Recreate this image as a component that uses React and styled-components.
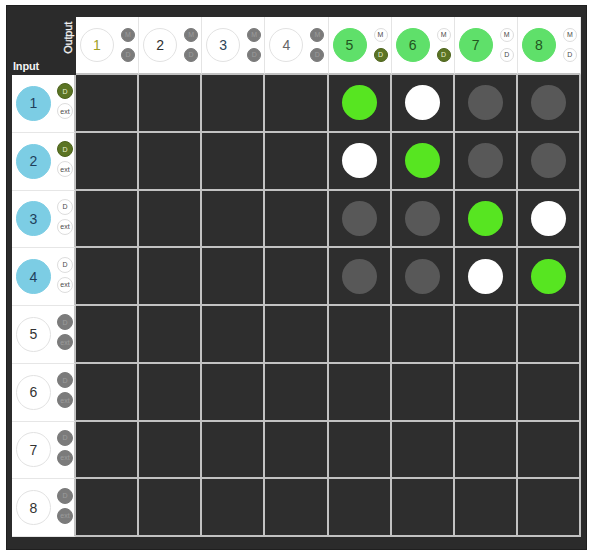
import React from "react";
import styled, { createGlobalStyle, css } from "styled-components";

const Global = createGlobalStyle`
  html, body { margin: 0; padding: 0; background: #ffffff; }
  body { font-family: "Liberation Sans", Arial, sans-serif; }
  * { box-sizing: border-box; }
`;

const Frame = styled.div`
  display: inline-block;
  margin: 5px 0 0 6px;
  padding: 11px 5px 12px 5px;
  background: #2b2b2b;
  border: 1px solid #1f1f1f;
`;

const Grid = styled.div`
  display: grid;
  grid-template-columns: 64px repeat(8, 63.125px);
  grid-template-rows: 58px repeat(8, 57.75px);
`;

const Corner = styled.div`
  display: flex;
  align-items: flex-end;
  justify-content: space-between;
  padding: 0 2px 3px 1px;
  color: #f2f2f2;
  font-size: 11px;
  font-weight: bold;
  letter-spacing: -0.2px;
`;

const CornerInput = styled.span`
  line-height: 1;
`;

const CornerOutput = styled.span`
  writing-mode: vertical-rl;
  transform: rotate(180deg);
  align-self: flex-start;
  margin-top: 5px;
  line-height: 1;
  font-weight: normal;
  -webkit-text-stroke: 0.3px #f2f2f2;
`;

const HeaderCell = styled.div`
  display: flex;
  align-items: center;
  gap: 7px;
  padding-left: 4px;
  background: #ffffff;
  border-right: 1px solid #e4e4e4;
  border-bottom: 2px solid #c2c2c2;
`;

const InputCell = styled.div`
  display: flex;
  align-items: center;
  gap: 6px;
  padding-left: 4px;
  background: #ffffff;
  border-bottom: 1px solid #e6e6e6;
  border-right: 2px solid #c2c2c2;
`;

const MatrixCell = styled.div`
  display: flex;
  align-items: center;
  justify-content: center;
  background: #2e2e2e;
  border-right: 2px solid #c2c2c2;
  border-bottom: 2px solid #c2c2c2;
`;

const bigVariants = {
  white: css`
    background: #ffffff;
    border: 1px solid #e2e2e2;
  `,
  blue: css`
    background: #7ccde4;
    border: 1px solid #7ccde4;
  `,
  green: css`
    background: #5fe06a;
    border: 1px solid #5fe06a;
  `,
};

const BigCircle = styled.div`
  width: ${(p) => p.$size}px;
  height: ${(p) => p.$size}px;
  border-radius: 50%;
  display: flex;
  align-items: center;
  justify-content: center;
  font-size: 14px;
  color: ${(p) => p.$color};
  flex: none;
  ${(p) => bigVariants[p.$variant]}
`;

const SmallStack = styled.div`
  display: flex;
  flex-direction: column;
  gap: ${(p) => p.$gap}px;
  margin-top: ${(p) => p.$offset}px;
`;

const smallVariants = {
  gray: css`
    background: #7b7b7b;
    color: #9c9c9c;
    border: 1px solid #7b7b7b;
  `,
  white: css`
    background: #ffffff;
    color: #4a4a4a;
    border: 1px solid #dddddd;
  `,
  olive: css`
    background: #5b7424;
    color: #e8f0d0;
    border: 1px solid #4c621c;
  `,
};

const SmallCircle = styled.div`
  width: ${(p) => p.$size}px;
  height: ${(p) => p.$size}px;
  border-radius: 50%;
  display: flex;
  align-items: center;
  justify-content: center;
  font-size: 7px;
  line-height: 1;
  ${(p) => smallVariants[p.$variant]}
`;

const dotColors = {
  green: "#57e521",
  white: "#ffffff",
  gray: "#585858",
};

const Dot = styled.div`
  width: 35px;
  height: 35px;
  border-radius: 50%;
  background: ${(p) => dotColors[p.$kind]};
`;

const outputs = [
  { n: 1, big: "white", color: "#a0a024", m: "gray", d: "gray" },
  { n: 2, big: "white", color: "#2f2f2f", m: "gray", d: "gray" },
  { n: 3, big: "white", color: "#2c4458", m: "gray", d: "gray" },
  { n: 4, big: "white", color: "#666666", m: "gray", d: "gray" },
  { n: 5, big: "green", color: "#22561f", m: "white", d: "olive" },
  { n: 6, big: "green", color: "#22561f", m: "white", d: "olive" },
  { n: 7, big: "green", color: "#22561f", m: "white", d: "white" },
  { n: 8, big: "green", color: "#22561f", m: "white", d: "white" },
];

const inputs = [
  { n: 1, big: "blue", color: "#1f3f5c", d: "olive", e: "white" },
  { n: 2, big: "blue", color: "#1f3f5c", d: "olive", e: "white" },
  { n: 3, big: "blue", color: "#1f3f5c", d: "white", e: "white" },
  { n: 4, big: "blue", color: "#1f3f5c", d: "white", e: "white" },
  { n: 5, big: "white", color: "#333333", d: "gray", e: "gray" },
  { n: 6, big: "white", color: "#333333", d: "gray", e: "gray" },
  { n: 7, big: "white", color: "#333333", d: "gray", e: "gray" },
  { n: 8, big: "white", color: "#333333", d: "gray", e: "gray" },
];

const dots = [
  [null, null, null, null, "green", "white", "gray", "gray"],
  [null, null, null, null, "white", "green", "gray", "gray"],
  [null, null, null, null, "gray", "gray", "green", "white"],
  [null, null, null, null, "gray", "gray", "white", "green"],
  [null, null, null, null, null, null, null, null],
  [null, null, null, null, null, null, null, null],
  [null, null, null, null, null, null, null, null],
  [null, null, null, null, null, null, null, null],
];

export default function App() {
  return (
    <>
      <Global />
      <Frame>
        <Grid>
          <Corner>
            <CornerInput>Input</CornerInput>
            <CornerOutput>Output</CornerOutput>
          </Corner>
          {outputs.map((o) => (
            <HeaderCell key={`o${o.n}`}>
              <BigCircle $size={34} $variant={o.big} $color={o.color}>
                {o.n}
              </BigCircle>
              <SmallStack $gap={6} $offset={-1}>
                <SmallCircle $size={14} $variant={o.m}>M</SmallCircle>
                <SmallCircle $size={14} $variant={o.d}>D</SmallCircle>
              </SmallStack>
            </HeaderCell>
          ))}
          {inputs.map((inp, r) => (
            <React.Fragment key={`r${inp.n}`}>
              <InputCell>
                <BigCircle $size={35} $variant={inp.big} $color={inp.color}>
                  {inp.n}
                </BigCircle>
                <SmallStack $gap={4} $offset={-4}>
                  <SmallCircle $size={16} $variant={inp.d}>D</SmallCircle>
                  <SmallCircle $size={16} $variant={inp.e}>ext</SmallCircle>
                </SmallStack>
              </InputCell>
              {dots[r].map((k, c) => (
                <MatrixCell key={`c${r}-${c}`}>
                  {k && <Dot $kind={k} />}
                </MatrixCell>
              ))}
            </React.Fragment>
          ))}
        </Grid>
      </Frame>
    </>
  );
}
